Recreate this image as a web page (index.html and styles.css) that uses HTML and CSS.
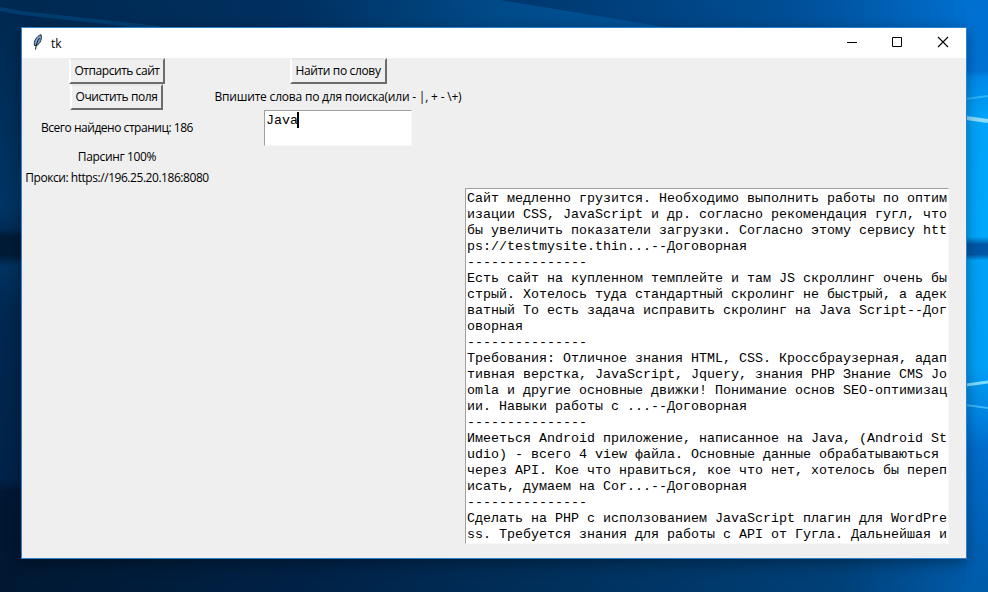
FILE: index.html
```
<!DOCTYPE html>
<html lang="ru">
<head>
    <meta charset="UTF-8">
    <meta name="viewport" content="width=device-width, initial-scale=1.0">
    <title>tk</title>
    <link rel="stylesheet" href="styles.css">
</head>
<body>
    <!-- Обои рабочего стола -->
    <svg class="wallpaper" viewBox="0 0 988 592" preserveAspectRatio="none" aria-hidden="true">
        <defs>
            <linearGradient id="top">
                <stop offset="0" stop-color="#002850"/>
                <stop offset="0.3" stop-color="#003060"/>
                <stop offset="0.5" stop-color="#004a88"/>
                <stop offset="0.8" stop-color="#0058a6"/>
                <stop offset="0.97" stop-color="#0070d0"/>
            </linearGradient>
            <linearGradient id="shade">
                <stop offset="0" stop-color="#002e60" stop-opacity="0.7"/>
                <stop offset="1" stop-color="#003c78" stop-opacity="0"/>
            </linearGradient>
            <linearGradient id="bottom">
                <stop offset="0" stop-color="#001832"/>
                <stop offset="0.3" stop-color="#002145"/>
                <stop offset="0.6" stop-color="#00325f"/>
                <stop offset="0.85" stop-color="#004078"/>
                <stop offset="0.98" stop-color="#005aa8"/>
            </linearGradient>
            <linearGradient id="left" x2="0" y2="1">
                <stop offset="0" stop-color="#002850"/>
                <stop offset="0.35" stop-color="#003463"/>
                <stop offset="0.385" stop-color="#002d58"/>
                <stop offset="0.4" stop-color="#001a36"/>
                <stop offset="0.43" stop-color="#001a36"/>
                <stop offset="0.45" stop-color="#003260"/>
                <stop offset="0.52" stop-color="#002850"/>
                <stop offset="0.81" stop-color="#002248"/>
                <stop offset="0.83" stop-color="#001834"/>
                <stop offset="1" stop-color="#001832"/>
            </linearGradient>
            <linearGradient id="right" x2="0" y2="1">
                <stop offset="0" stop-color="#0070d0"/>
                <stop offset="0.12" stop-color="#0072d4"/>
                <stop offset="0.13" stop-color="#0088e8"/>
                <stop offset="0.2" stop-color="#00a4fa"/>
                <stop offset="0.4" stop-color="#00a8fc"/>
                <stop offset="0.413" stop-color="#0058a6"/>
                <stop offset="0.43" stop-color="#0058a6"/>
                <stop offset="0.44" stop-color="#00a2f8"/>
                <stop offset="0.62" stop-color="#00a0f6"/>
                <stop offset="0.7" stop-color="#0084e2"/>
                <stop offset="0.76" stop-color="#006ccc"/>
                <stop offset="1" stop-color="#005aa8"/>
            </linearGradient>
        </defs>
        <rect width="988" height="300" fill="url(#top)"/>
        <rect y="300" width="988" height="292" fill="url(#bottom)"/>
        <path d="M500 0L665 27H988V0Z" fill="url(#shade)"/>
        <rect width="22" height="592" fill="url(#left)"/>
        <rect x="966" width="22" height="592" fill="url(#right)"/>
        <path d="M0 9L22 13L160 28" fill="none" stroke="#00508c" stroke-width="4" opacity="0.5"/>
        <path d="M966 99L988 96" stroke="#2cb4f8" stroke-width="2"/>
        <path d="M966 118L988 121" stroke="#8cdcff" stroke-width="4"/>
        <path d="M966 385L988 382" stroke="#7cdcff" stroke-width="3"/>
        <path d="M966 405L988 408" stroke="#38b8f8" stroke-width="2"/>
    </svg>

    <div class="window">
        <header class="titlebar">
            <svg class="feather" width="12" height="16" viewBox="0 0 12 16" aria-hidden="true">
                <path d="M2.500 11.500C1.500 7.500 4.500 2 9 .7C10.200 4.500 8.500 9.500 4.500 11.500Z" fill="#7ba4cc" stroke="#17263c"/>
                <path d="M7.500 4C5.500 7 4.300 10 3.500 15.500" fill="none" stroke="#0c1420"/>
            </svg>
            <span class="title">tk</span>
            <div class="controls">
                <svg width="46" height="30" viewBox="0 0 46 30"><path d="M18 14.500H28" stroke="#000"/></svg>
                <svg width="46" height="30" viewBox="0 0 46 30"><path d="M17.500 9.500H26.500V18.500H17.500Z" fill="none" stroke="#000"/></svg>
                <svg width="46" height="30" viewBox="0 0 46 30"><path d="M17 9L27 19M27 9L17 19" stroke="#000" stroke-width="1.100"/></svg>
            </div>
        </header>

        <main class="form">
            <div class="left">
                <button class="parse"><span>Отпарсить сайт</span></button>
                <button class="clear"><span>Очистить поля</span></button>
                <div class="label total">Всего найдено страниц: 186</div>
                <div class="label progress">Парсинг 100%</div>
                <div class="label proxy">Прокси: https://196.25.20.186:8080</div>
            </div>
            <div class="middle">
                <button class="find"><span>Найти по слову</span></button>
                <div class="label hint">Впишите слова по для поиска(или - |, + - \+)</div>
                <div class="query">Java<span class="caret"></span></div>
            </div>
            <pre class="results">Сайт медленно грузится. Необходимо выполнить работы по оптим
изации CSS, JavaScript и др. согласно рекомендация гугл, что
бы увеличить показатели загрузки. Согласно этому сервису htt
ps://testmysite.thin...--Договорная
---------------
Есть сайт на купленном темплейте и там JS скроллинг очень бы
стрый. Хотелось туда стандартный скролинг не быстрый, а адек
ватный То есть задача исправить скролинг на Java Script--Дог
оворная
---------------
Требования: Отличное знания HTML, CSS. Кроссбраузерная, адап
тивная верстка, JavaScript, Jquery, знания PHP Знание CMS Jo
omla и другие основные движки! Понимание основ SEO-оптимизац
ии. Навыки работы с ...--Договорная
---------------
Имееться Android приложение, написанное на Java, (Android St
udio) - всего 4 view файла. Основные данные обрабатываються
через API. Кое что нравиться, кое что нет, хотелось бы переп
исать, думаем на Cor...--Договорная
---------------
Сделать на PHP с исползованием JavaScript плагин для WordPre
ss. Требуется знания для работы с API от Гугла. Дальнейшая и</pre>
        </main>
    </div>
</body>
</html>
```
FILE: styles.css
```
* {
    box-sizing: border-box;
}

body {
    margin: 0;
    height: 592px;
    padding: 27px 21px 33px;
    overflow: hidden;
    font-family: "Open Sans", "Noto Sans", sans-serif;
    font-size: 12px;
    color: #000;
}

.wallpaper {
    position: absolute;
    top: 0;
    left: 0;
    width: 988px;
    height: 592px;
    z-index: -1;
}

.window {
    width: 946px;
    height: 532px;
    border: 1px solid #2b82cc;
    background-color: #efefef;
    box-shadow: 0 4px 14px rgba(0, 0, 0, 0.35);
}

.titlebar {
    display: flex;
    align-items: center;
    height: 30px;
    padding-left: 10px;
    background-color: #fff;
}

.feather {
    margin-top: -2px;
}

.title {
    margin-left: 7px;
}

.controls {
    display: flex;
    margin-left: auto;
    margin-right: -1px;
}

.form {
    display: grid;
    grid-template-columns: 190px 253px 484px;
    height: 500px;
}

.left,
.middle {
    display: flex;
    flex-direction: column;
    align-items: center;
}

.middle {
    padding-right: 1px;
}

button {
    height: 26px;
    padding: 0;
    border: 2px solid;
    border-color: #e6e6e6 #6c6c6c #6c6c6c #fff;
    background-color: #efefef;
    font: inherit;
    line-height: 20px;
    white-space: nowrap;
}

.parse {
    width: 96px;
    letter-spacing: -0.45px;
}

.clear {
    width: 93px;
    margin-right: 1px;
    letter-spacing: -0.4px;
}

.find {
    width: 97px;
    letter-spacing: -0.35px;
}

.label {
    display: flex;
    align-items: center;
    padding-bottom: 2px;
    white-space: nowrap;
    letter-spacing: -0.2px;
}

.total {
    height: 36px;
    letter-spacing: -0.47px;
}

.progress {
    height: 22px;
    letter-spacing: -0.35px;
}

.proxy {
    height: 20px;
    letter-spacing: -0.45px;
}

.hint {
    height: 26px;
}

.query,
.results {
    border: 1px solid #a0a0a0;
    border-right-color: #f8f8f8;
    border-bottom-color: #f8f8f8;
    background-color: #fff;
    font-family: "Liberation Mono", monospace;
    font-size: 13.333px;
    line-height: 16px;
}

.query {
    display: flex;
    width: 148px;
    height: 36px;
    padding: 2px 1px 1px;
}

.caret {
    width: 2px;
    height: 16px;
    margin: -1px 0 0 -1px;
    background-color: #000;
}

.results {
    height: 356px;
    margin: 130px 0 0;
    padding: 2px 1px;
    overflow: hidden;
}
```
